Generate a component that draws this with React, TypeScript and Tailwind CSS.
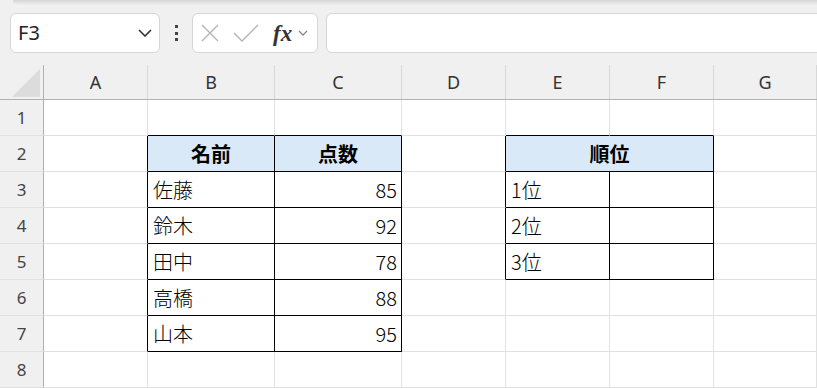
import React from 'react';

const cols = ['A', 'B', 'C', 'D', 'E', 'F', 'G'];
const colW = ['w-[104px]', 'w-[127px]', 'w-[127px]', 'w-[104px]', 'w-[104px]', 'w-[104px]', 'flex-1'];

// cell content: [row][col] -> {text, align, head}
type Cell = { text?: string; align?: 'l' | 'r' | 'c'; head?: boolean; span?: number };

const data: Record<string, Cell> = {
  '2B': { text: '名前', align: 'c', head: true },
  '2C': { text: '点数', align: 'c', head: true },
  '3B': { text: '佐藤' }, '3C': { text: '85', align: 'r' },
  '4B': { text: '鈴木' }, '4C': { text: '92', align: 'r' },
  '5B': { text: '田中' }, '5C': { text: '78', align: 'r' },
  '6B': { text: '高橋' }, '6C': { text: '88', align: 'r' },
  '7B': { text: '山本' }, '7C': { text: '95', align: 'r' },
  '2E': { text: '順位', align: 'c', head: true, span: 2 },
  '3E': { text: '1位' }, '3F': {},
  '4E': { text: '2位' }, '4F': {},
  '5E': { text: '3位' }, '5F': {},
};

// is a cell part of one of the bordered tables
const inTable = (r: number, c: number) => {
  const col = cols[c];
  if (r >= 2 && r <= 7 && (col === 'B' || col === 'C')) return true;
  if (r >= 2 && r <= 5 && (col === 'E' || col === 'F')) return true;
  return false;
};

function SheetRow({ r }: { r: number }) {
  const cells: React.ReactNode[] = [];
  for (let c = 0; c < cols.length; c++) {
    const key = `${r}${cols[c]}`;
    const cell = data[key];
    const span = cell?.span ?? 1;
    const lastC = c + span - 1;
    const rightBlack = inTable(r, lastC) || inTable(r, lastC + 1);
    const bottomBlack = inTable(r, c) || inTable(r + 1, c);
    const w = span === 2 ? 'w-[208px]' : colW[c];
    const align =
      cell?.align === 'r' ? 'justify-end pr-[4px]' : cell?.align === 'c' ? 'justify-center' : 'justify-start pl-[5px]';
    cells.push(
      <div
        key={key}
        className={`${w} shrink-0 h-full flex items-center border-r border-b ${align} ${
          rightBlack ? 'border-r-black' : 'border-r-[#e1e1e1]'
        } ${bottomBlack ? 'border-b-black' : 'border-b-[#e1e1e1]'} ${
          cell?.head ? 'bg-[#dae9f8] font-bold' : 'bg-white font-light'
        }`}
      >
        {cell?.text && <span className="text-[20px] text-black leading-none">{cell.text}</span>}
      </div>
    );
    c += span - 1;
  }
  return (
    <div className="flex h-[36px]">
      <div className="w-[44px] shrink-0 h-full bg-[#f0f0f0] border-r border-r-[#b1b1b1] border-b border-b-[#e1e1e1] flex items-center justify-center text-[17px] text-[#444] font-['Noto_Sans',sans-serif]">
        {r}
      </div>
      {cells}
    </div>
  );
}

export default function App() {
  return (
    <div className="w-[817px] h-[388px] overflow-hidden bg-[#f0f0f0] font-['Noto_Sans_CJK_JP','Noto_Sans',sans-serif]">
      {/* toolbar */}
      <div className="h-[65px]">
        <div className="ml-[13px] h-[5px] bg-gradient-to-b from-[#d6d6d6] to-[#efefef] rounded-bl-md" />
        <div className="flex items-center pl-[10px] pt-[8px]">
          <div className="w-[150px] shrink-0 h-[40px] bg-white border border-[#d6d6d6] rounded-[6px] flex items-center justify-between pl-[7px] pr-[7px]">
            <span className="text-[20px] text-[#222] font-['Noto_Sans',sans-serif] leading-none">F3</span>
            <svg width="14" height="8" viewBox="0 0 14 8">
              <path d="M1 1 L7 7 L13 1" stroke="#333" strokeWidth="1.6" fill="none" />
            </svg>
          </div>
          <div className="w-[32px] shrink-0 flex flex-col items-center gap-[3.5px]">
            <div className="w-[3px] h-[3px] bg-[#444]" />
            <div className="w-[3px] h-[3px] bg-[#444]" />
            <div className="w-[3px] h-[3px] bg-[#444]" />
          </div>
          <div className="w-[126px] shrink-0 h-[40px] bg-white border border-[#d6d6d6] rounded-[6px] flex items-center pl-[8px]">
            <svg width="18" height="18" viewBox="0 0 18 18">
              <path d="M1 1 L17 17 M17 1 L1 17" stroke="#b4b4b4" strokeWidth="1.4" fill="none" />
            </svg>
            <svg width="26" height="18" viewBox="0 0 26 18" className="ml-[14px]">
              <path d="M1 9 L9 17 L25 1" stroke="#b4b4b4" strokeWidth="1.4" fill="none" />
            </svg>
            <span className="ml-[14px] text-[23px] italic font-bold text-[#333] font-['Liberation_Serif',serif] leading-none">fx</span>
            <svg width="10" height="6" viewBox="0 0 10 6" className="ml-[6px]">
              <path d="M1 1 L5 5 L9 1" stroke="#888" strokeWidth="1.3" fill="none" />
            </svg>
          </div>
          <div className="ml-[8px] w-[600px] shrink-0 h-[40px] bg-white border border-[#d6d6d6] rounded-[6px]" />
        </div>
      </div>
      {/* column header */}
      <div className="flex h-[35px] border-b border-b-[#b1b1b1]">
        <div className="w-[44px] shrink-0 border-r border-r-[#b1b1b1] flex items-end justify-end pr-[3px] pb-[2px]">
          <svg width="28" height="28" viewBox="0 0 28 28">
            <path d="M28 0 L28 28 L0 28 Z" fill="#dcdcdc" />
          </svg>
        </div>
        {cols.map((c, i) => (
          <div
            key={c}
            className={`${colW[i]} shrink-0 h-full border-r border-r-[#d8d8d8] flex items-center justify-center text-[18px] text-[#333] font-['Noto_Sans',sans-serif]`}
          >
            {c}
          </div>
        ))}
      </div>
      {[1, 2, 3, 4, 5, 6, 7, 8].map((r) => (
        <SheetRow key={r} r={r} />
      ))}
    </div>
  );
}
